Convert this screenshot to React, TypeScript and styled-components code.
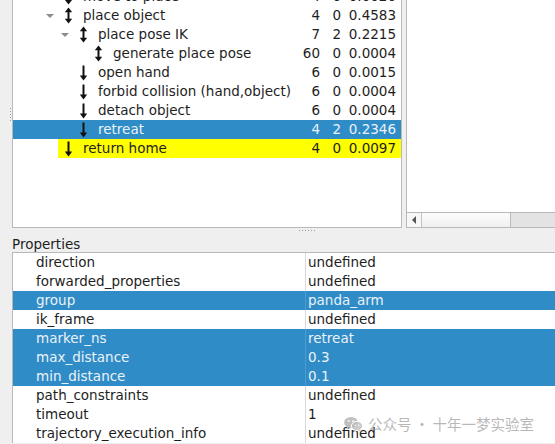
import React from "react"
import styled, { createGlobalStyle } from "styled-components"

type Stage = {
  name: string
  level: number
  icon: "both" | "down"
  open?: boolean
  ok: string
  failed: string
  time: string
  state?: "selected" | "marked"
}

const stages: Stage[] = [
  { name: "move to place", level: 0, icon: "both", ok: "4", failed: "0", time: "0.0026" },
  { name: "place object", level: 0, icon: "both", open: true, ok: "4", failed: "0", time: "0.4583" },
  { name: "place pose IK", level: 1, icon: "both", open: true, ok: "7", failed: "2", time: "0.2215" },
  { name: "generate place pose", level: 2, icon: "both", ok: "60", failed: "0", time: "0.0004" },
  { name: "open hand", level: 1, icon: "down", ok: "6", failed: "0", time: "0.0015" },
  { name: "forbid collision (hand,object)", level: 1, icon: "down", ok: "6", failed: "0", time: "0.0004" },
  { name: "detach object", level: 1, icon: "down", ok: "6", failed: "0", time: "0.0004" },
  { name: "retreat", level: 1, icon: "down", ok: "4", failed: "2", time: "0.2346", state: "selected" },
  { name: "return home", level: 0, icon: "down", ok: "4", failed: "0", time: "0.0097", state: "marked" },
]

const properties = [
  { name: "direction", value: "undefined" },
  { name: "forwarded_properties", value: "undefined" },
  { name: "group", value: "panda_arm", selected: true },
  { name: "ik_frame", value: "undefined" },
  { name: "marker_ns", value: "retreat", selected: true },
  { name: "max_distance", value: "0.3", selected: true },
  { name: "min_distance", value: "0.1", selected: true },
  { name: "path_constraints", value: "undefined" },
  { name: "timeout", value: "1" },
  { name: "trajectory_execution_info", value: "undefined" },
]

const GlobalStyle = createGlobalStyle`
  html, body {
    margin: 0;
    padding: 0;
    background: #efefef;
  }
  body {
    font-family: "DejaVu Sans", "Noto Sans CJK SC", sans-serif;
    font-size: 13.5px;
    color: #1e1e1e;
    overflow: hidden;
  }
`

const Page = styled.div`
  position: relative;
  width: 555px;
  height: 444px;
  overflow: hidden;
  background: #efefef;
`

const TopPane = styled.div`
  display: flex;
  height: 228px;
`

const Gutter = styled.div`
  width: 12px;
  flex: none;
  display: flex;
  align-items: center;
  justify-content: flex-end;
  padding-right: 1px;
  box-sizing: border-box;
`

const VDots = styled.div`
  display: flex;
  flex-direction: column;
  gap: 2px;
  span {
    width: 1px;
    height: 1px;
    background: #9c9c9c;
  }
`

const HDots = styled.div`
  display: flex;
  gap: 2px;
  span {
    width: 1px;
    height: 1px;
    background: #9c9c9c;
  }
`

const TreePanel = styled.div`
  width: 390px;
  flex: none;
  box-sizing: border-box;
  background: #fff;
  border: 1px solid #b9b9b9;
  border-top: none;
  overflow: hidden;
`

const TreeList = styled.div`
  margin-top: -13px;
`

const TreeRow = styled.div<{ $selected?: boolean }>`
  display: flex;
  height: 19px;
  line-height: 19px;
  background: ${p => (p.$selected ? "#308cc6" : "transparent")};
  color: ${p => (p.$selected ? "#eaf2f9" : "#1e1e1e")};
`

const Branch = styled.div<{ $level: number }>`
  width: ${p => 45 + p.$level * 15}px;
  flex: none;
  display: flex;
  justify-content: flex-end;
  align-items: center;
`

const Expander = styled.div<{ $open?: boolean }>`
  width: 15px;
  height: 19px;
  display: flex;
  align-items: center;
  justify-content: center;
  &::after {
    content: "";
    display: ${p => (p.$open ? "block" : "none")};
    border-left: 4px solid transparent;
    border-right: 4px solid transparent;
    border-top: 4px solid #8c8c8c;
    margin-right: 2px;
  }
`

const Item = styled.div<{ $marked?: boolean }>`
  flex: 1;
  display: flex;
  align-items: center;
  min-width: 0;
  background: ${p => (p.$marked ? "#ffff00" : "transparent")};
`

const IconBox = styled.div`
  width: 12px;
  margin-left: 4px;
  margin-right: 9px;
  height: 19px;
  display: flex;
  align-items: center;
  justify-content: center;
  color: #111;
`

const Label = styled.div`
  flex: 1;
  white-space: nowrap;
  overflow: hidden;
`

const Num = styled.div<{ $w: number; $pad?: number }>`
  width: ${p => p.$w}px;
  flex: none;
  text-align: right;
  padding-right: ${p => p.$pad ?? 4}px;
  box-sizing: border-box;
`

const SidePanel = styled.div`
  flex: 1;
  margin-left: 4px;
  background: #fff;
  border-left: 1px solid #b9b9b9;
  border-bottom: 1px solid #b9b9b9;
  display: flex;
  flex-direction: column;
  justify-content: flex-end;
`

const ScrollBar = styled.div`
  height: 14px;
  display: flex;
  border-top: 1px solid #b9b9b9;
  background: #e3e3e3;
`

const ScrollButton = styled.div`
  width: 14px;
  flex: none;
  display: flex;
  align-items: center;
  justify-content: center;
  background: #f7f7f7;
  border-right: 1px solid #c4c4c4;
  &::after {
    content: "";
    border-top: 4px solid transparent;
    border-bottom: 4px solid transparent;
    border-right: 4px solid #555;
  }
`

const ScrollHandle = styled.div`
  width: 88px;
  flex: none;
  background: linear-gradient(#fcfcfc, #efefef);
  border-right: 1px solid #b9b9b9;
`

const SplitRow = styled.div`
  height: 8px;
  display: flex;
  align-items: flex-start;
  padding: 2px 0 0 299px;
  box-sizing: border-box;
`

const SectionTitle = styled.div`
  height: 16px;
  line-height: 16px;
  padding-left: 12px;
`

const PropTable = styled.div`
  margin-left: 12px;
  border-left: 1px solid #b9b9b9;
  border-top: 1px solid #b9b9b9;
  background: #fff;
`

const PropRow = styled.div<{ $selected?: boolean }>`
  display: flex;
  height: 19px;
  line-height: 19px;
  background: ${p => (p.$selected ? "#308cc6" : "#fff")};
  color: ${p => (p.$selected ? "#eaf2f9" : "#1e1e1e")};
`

const PropName = styled.div`
  width: 292px;
  flex: none;
  padding-left: 23px;
  box-sizing: border-box;
  white-space: nowrap;
`

const PropValue = styled.div<{ $selected?: boolean }>`
  flex: 1;
  padding-left: 2px;
  border-left: 1px solid ${p => (p.$selected ? "#4f9bd0" : "#d9d9d9")};
  white-space: nowrap;
`

const Watermark = styled.div`
  position: absolute;
  left: 344px;
  top: 414px;
  display: flex;
  align-items: center;
  gap: 5px;
  font-family: "Noto Sans CJK SC", sans-serif;
  font-size: 14.5px;
  line-height: 19px;
  color: rgba(160, 160, 160, 0.75);
`

const ArrowIcon = ({ kind }: { kind: "both" | "down" }) =>
  kind === "both" ? (
    <svg width="9" height="17" viewBox="0 0 9 17">
      <path d="M4.5 3v11" stroke="currentColor" strokeWidth="2" />
      <path d="M0.8 5.2 4.5 0.6 8.2 5.2z" fill="currentColor" />
      <path d="M0.8 11.8 4.5 16.4 8.2 11.8z" fill="currentColor" />
    </svg>
  ) : (
    <svg width="9" height="16" viewBox="0 0 9 16">
      <path d="M4.5 0.5v12" stroke="currentColor" strokeWidth="2" />
      <path d="M0.8 10.6 4.5 15.6 8.2 10.6z" fill="currentColor" />
    </svg>
  )

const WeChatIcon = () => (
  <svg width="19" height="16" viewBox="0 0 19 16">
    <ellipse cx="7" cy="6.5" rx="6.8" ry="5.6" fill="rgba(170,170,170,0.75)" />
    <path d="M3 10.5 2.2 13.5 5.6 11.6z" fill="rgba(170,170,170,0.75)" />
    <ellipse cx="13" cy="10" rx="5.6" ry="4.6" fill="rgba(190,190,190,0.8)" stroke="#fff" strokeWidth="1" />
    <path d="M15.8 13.6 17 15.8 14 14.4z" fill="rgba(190,190,190,0.8)" />
    <circle cx="4.8" cy="5" r="0.9" fill="#fff" />
    <circle cx="9" cy="5" r="0.9" fill="#fff" />
    <circle cx="11.3" cy="9.2" r="0.7" fill="#fff" />
    <circle cx="14.7" cy="9.2" r="0.7" fill="#fff" />
  </svg>
)

const dots = (n: number) => Array.from({ length: n }, (_, i) => <span key={i} />)

export default function App() {
  return (
    <Page>
      <GlobalStyle />
      <TopPane>
        <Gutter>
          <VDots>{dots(5)}</VDots>
        </Gutter>
        <TreePanel>
          <TreeList>
            {stages.map(s => (
              <TreeRow key={s.name} $selected={s.state === "selected"}>
                <Branch $level={s.level}>
                  <Expander $open={s.open} />
                </Branch>
                <Item $marked={s.state === "marked"}>
                  <IconBox>
                    <ArrowIcon kind={s.icon} />
                  </IconBox>
                  <Label>{s.name}</Label>
                  <Num $w={24}>{s.ok}</Num>
                  <Num $w={23} $pad={6}>{s.failed}</Num>
                  <Num $w={54} $pad={5}>{s.time}</Num>
                </Item>
              </TreeRow>
            ))}
          </TreeList>
        </TreePanel>
        <SidePanel>
          <ScrollBar>
            <ScrollButton />
            <ScrollHandle />
          </ScrollBar>
        </SidePanel>
      </TopPane>
      <SplitRow>
        <HDots>{dots(6)}</HDots>
      </SplitRow>
      <SectionTitle>Properties</SectionTitle>
      <PropTable>
        {properties.map(p => (
          <PropRow key={p.name} $selected={p.selected}>
            <PropName>{p.name}</PropName>
            <PropValue $selected={p.selected}>{p.value}</PropValue>
          </PropRow>
        ))}
      </PropTable>
      <Watermark>
        <WeChatIcon />
        <span>公众号 · 十年一梦实验室</span>
      </Watermark>
    </Page>
  )
}
